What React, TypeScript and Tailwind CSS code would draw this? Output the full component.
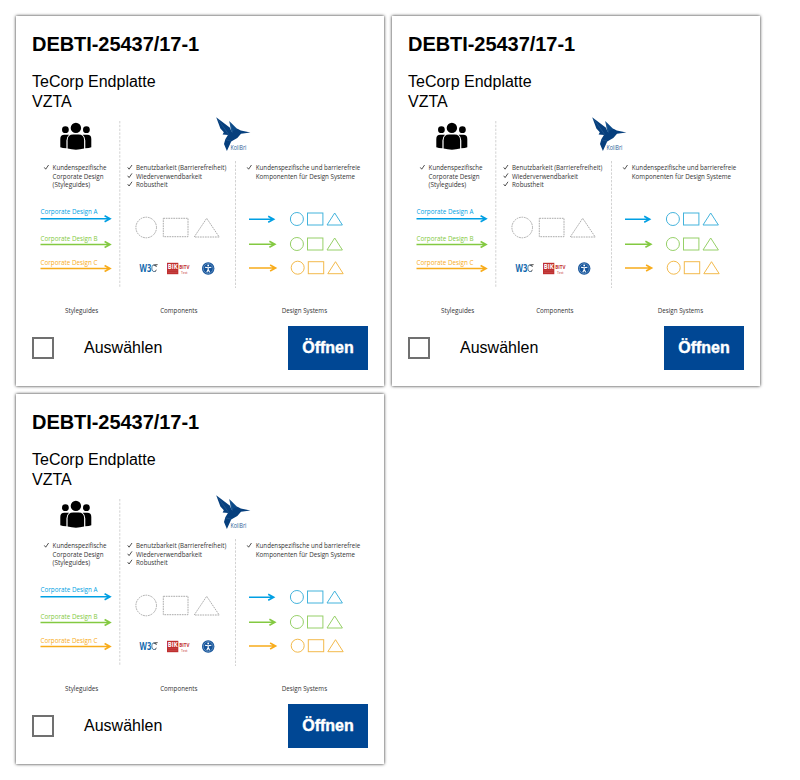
import React from "react";

const BLUE = "#009fe3";
const GREEN = "#83c941";
const ORANGE = "#f8ac1b";

type LabelProps = { x: number; y: number; w: number; fill?: string; size?: number; children: string };

function Label({ x, y, w, fill = "#333", size = 7.3, children }: LabelProps) {
  return (
    <text x={x} y={y} textLength={w} lengthAdjust="spacingAndGlyphs" fontSize={size} fill={fill}>
      {children}
    </text>
  );
}

function Check({ x, y }: { x: number; y: number }) {
  return <path d={`M${x} ${y} l1.4 1.8 l2.9 -4.2`} fill="none" stroke="#333" strokeWidth="0.85" />;
}

function Arrow({ x1, x2, y, color }: { x1: number; x2: number; y: number; color: string }) {
  return (
    <path
      d={`M${x1} ${y} H${x2 - 1} M${x2 - 6.3} ${y - 3} L${x2 - 0.8} ${y} L${x2 - 6.3} ${y + 3}`}
      fill="none"
      stroke={color}
      strokeWidth="1.6"
    />
  );
}

function Shapes({ x, y, color }: { x: number; y: number; color: string }) {
  return (
    <g fill="none" stroke={color} strokeWidth="1">
      <circle cx={x + 6.7} cy={y} r="6.5" />
      <rect x={x + 17.3} y={y - 6} width="15.4" height="12" />
      <path d={`M${x + 44.5} ${y - 6} l7.7 12 h-15.4 z`} />
    </g>
  );
}

function Illustration() {
  return (
    <svg
      viewBox="32 112 336 206"
      className="block h-[206px] w-[336px] overflow-visible font-['Open_Sans',sans-serif]"
    >
      <g stroke="#d2d2d2" strokeWidth="1" strokeDasharray="2.4 1.4">
        <path d="M119.8 121 V288" />
        <path d="M235.5 161 V288" />
      </g>

      <g fill="#000">
        <circle cx="65.4" cy="129.7" r="3.4" />
        <circle cx="86.4" cy="129.7" r="3.4" />
        <path d="M60.3 147.2 V139 Q60.3 134.8 64.3 134.8 H69 Q66.4 137 66.4 140.5 V148.2 Q62.5 148.2 60.3 147.2 Z" />
        <path d="M91.3 147.2 V139 Q91.3 134.8 87.3 134.8 H82.7 Q85.3 137 85.3 140.5 V148.2 Q89.1 148.2 91.3 147.2 Z" />
        <circle cx="75.9" cy="127.9" r="5.2" />
        <path d="M67.6 148.6 V140.5 Q67.6 134.6 73.2 134.6 H78.6 Q84.1 134.6 84.1 140.5 V148.6 Q76 150.8 67.6 148.6 Z" />
      </g>

      <g>
        <path d="M216.2 117.2 L230 127.7 L232.2 133.6 L228.2 135 L222.6 134.4 L223.8 132.2 L220.4 128.6 Z" fill="#063f7d" />
        <path d="M229.2 121 L237.3 129 L235 132 L231.5 132.5 Z" fill="#0b4a89" />
        <path d="M228.2 134.4 L232 131.6 L237.5 128.8 L240.8 130.5 L250.4 132.6 L241 133.7 L237.3 138 L231.2 141.6 L226.9 151 L224 144 L225.3 139.3 Z" fill="#063f7d" />
        <path d="M217 118 L228.6 134.4 M225 139.8 L231 141 M230 122 L232.5 132.6" fill="none" stroke="#5f8ab3" strokeWidth=".25" />
        <Label x={230.4} y={149.6} w={16} fill="#2b5e95" size={6.2}>KoliBri</Label>
      </g>

      <Check x={44.3} y={167.4} />
      <Label x={52.6} y={170.3} w={54}>Kundenspezifische</Label>
      <Label x={52.6} y={178.9} w={51}>Corporate Design</Label>
      <Label x={52.6} y={187.2} w={37.5}>(Styleguides)</Label>

      <Check x={127.7} y={167.4} />
      <Check x={127.7} y={175.8} />
      <Check x={127.7} y={184.2} />
      <Label x={136} y={170.3} w={90.3}>Benutzbarkeit (Barrierefreiheit)</Label>
      <Label x={136} y={178.9} w={66}>Wiederverwendbarkeit</Label>
      <Label x={136} y={187.2} w={31.7}>Robustheit</Label>

      <Check x={247.2} y={167.4} />
      <Label x={255.8} y={170.4} w={104.5}>Kundenspezifische und barrierefreie</Label>
      <Label x={255.8} y={179} w={99.3}>Komponenten für Design Systeme</Label>

      <Label x={40.5} y={214.3} w={57} fill={BLUE}>Corporate Design A</Label>
      <Arrow x1={40.5} x2={110.9} y={218.7} color={BLUE} />
      <Label x={40.5} y={240.8} w={57} fill={GREEN}>Corporate Design B</Label>
      <Arrow x1={40.5} x2={110.9} y={244.5} color={GREEN} />
      <Label x={40.5} y={264.6} w={57} fill={ORANGE}>Corporate Design C</Label>
      <Arrow x1={40.5} x2={110.9} y={268.5} color={ORANGE} />

      <g fill="none" stroke="#a3a3a3" strokeWidth="0.9" strokeDasharray="1.7 0.8">
        <circle cx="146.2" cy="227.5" r="10.3" />
        <rect x="163.3" y="218.3" width="24.7" height="18.4" />
        <path d="M206.7 218.3 L219.2 237 H194.2 Z" />
      </g>

      <text x="139.6" y="272.2" textLength="11.8" lengthAdjust="spacingAndGlyphs" fontSize="10.6" fontWeight="bold" fill="#1068ad">W3</text>
      <path d="M155.2 265.8 Q152.3 263.4 151.8 268 Q152 272.8 155.6 271.2" fill="none" stroke="#5b7d9b" strokeWidth="1" />
      <path d="M153.6 265 L157.6 264.6 M155.4 264.8 L156.4 267 M155 271.4 L156.6 270" stroke="#222" strokeWidth=".8" />

      <rect x="167" y="262.8" width="11.3" height="11.4" fill="#bf2f2f" />
      <text x="167.8" y="268.6" textLength="9.8" lengthAdjust="spacingAndGlyphs" fontSize="6.6" fontWeight="bold" fill="#fff">BIK</text>
      <path d="M168 270.7 H177.3 M168 272.5 H177.3" stroke="#d05f5f" strokeWidth=".4" />
      <text x="179.2" y="268.6" textLength="10.3" lengthAdjust="spacingAndGlyphs" fontSize="5.2" fontWeight="bold" fill="#bf2f2f">BITV</text>
      <text x="181" y="273.9" textLength="6.5" lengthAdjust="spacingAndGlyphs" fontSize="4.2" fill="#bf2f2f">Test</text>

      <circle cx="208.2" cy="268.5" r="6.2" fill="#14539a" />
      <circle cx="208.2" cy="268.5" r="4.9" fill="none" stroke="#c5d8eb" strokeWidth=".4" />
      <circle cx="208.2" cy="265.5" r=".9" fill="#fff" />
      <path d="M205 267.3 L208.2 267.8 L211.4 267.3 M208.2 267.7 V269.5 L206.8 272.2 M208.2 269.5 L209.6 272.2" fill="none" stroke="#fff" strokeWidth="1.1" />

      <Arrow x1={249} x2={274.5} y={219.3} color={BLUE} />
      <Arrow x1={249} x2={275.7} y={244.3} color={GREEN} />
      <Arrow x1={249} x2={276.4} y={268} color={ORANGE} />
      <Shapes x={290.2} y={219} color="#43b3dc" />
      <Shapes x={290.2} y={244} color="#96d068" />
      <Shapes x={291} y={267.7} color="#f3ba4c" />

      <Label x={65} y={312.7} w={33.3}>Styleguides</Label>
      <Label x={160.2} y={312.7} w={37.3}>Components</Label>
      <Label x={281.8} y={312.7} w={45.3}>Design Systems</Label>
    </svg>
  );
}

function Card() {
  return (
    <article className="flex h-[370px] flex-col bg-white p-4 shadow-[0_0_3px_#000000e0]">
      <h2 className="text-xl leading-6 font-bold tracking-[-0.05px]">DEBTI-25437/17-1</h2>
      <p className="mt-4 text-base leading-5">
        TeCorp Endplatte
        <br />
        VZTA
      </p>
      <Illustration />
      <div className="mt-auto flex h-11 items-center justify-between">
        <label className="flex items-center gap-[30px] text-base">
          <input type="checkbox" className="size-[22px] appearance-none border-2 border-[#707070] bg-white" />
          Auswählen
        </label>
        <button className="h-11 w-20 bg-[#004794] text-base font-bold text-white [-webkit-text-stroke:0.4px_white]">
          Öffnen
        </button>
      </div>
    </article>
  );
}

export default function App() {
  return (
    <main className="grid min-h-[780px] grid-cols-[368px_368px] content-start gap-2 bg-white p-4 font-['Liberation_Sans',Arial,sans-serif] text-black">
      <Card />
      <Card />
      <Card />
    </main>
  );
}
